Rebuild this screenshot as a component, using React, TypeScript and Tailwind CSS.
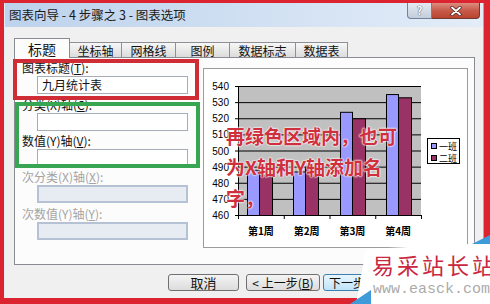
import React from 'react';

const GRID = [540, 530, 520, 510, 500, 490, 480, 470, 460];
const PLOT_L = 34;
const PLOT_R = 217;
const PLOT_T = 17;
const PLOT_B = 146;
const yOf = (v: number) => PLOT_T + ((540 - v) * (PLOT_B - PLOT_T)) / 80;

const WEEKS = [
  { label: '第1周', x: 43, a: 488, b: 485 },
  { label: '第2周', x: 89, a: 487, b: 490 },
  { label: '第3周', x: 136, a: 524, b: 520 },
  { label: '第4周', x: 182, a: 535, b: 533 },
];

function ChartPreview() {
  const catW = (PLOT_R - PLOT_L) / 4;
  return (
    <svg width="263" height="178" viewBox="0 0 263 178">
      <rect x={PLOT_L} y={PLOT_T} width={PLOT_R - PLOT_L} height={PLOT_B - PLOT_T} fill="#c0c0c0" />
      {GRID.map((v) => (
        <g key={v}>
          <line x1={PLOT_L - 3} x2={PLOT_R} y1={yOf(v) + 0.5} y2={yOf(v) + 0.5} stroke="#000" strokeWidth="1" />
          <text
            x="25"
            y={yOf(v) + 4}
            textAnchor="end"
            fontSize="10"
            fontFamily="'Liberation Sans', Arial, sans-serif"
            fill="#000"
          >
            {v}
          </text>
        </g>
      ))}
      {WEEKS.map((w) => (
        <g key={w.label}>
          <rect x={w.x + 0.5} y={yOf(w.a) + 0.5} width="12" height={PLOT_B - yOf(w.a)} fill="#9999ff" stroke="#000" strokeWidth="1" />
          <rect x={w.x + 12.5} y={yOf(w.b) + 0.5} width="13" height={PLOT_B - yOf(w.b)} fill="#993366" stroke="#000" strokeWidth="1" />
        </g>
      ))}
      <line x1={PLOT_L + 0.5} x2={PLOT_L + 0.5} y1={PLOT_T} y2={PLOT_B + 1} stroke="#000" />
      <line x1={PLOT_L} x2={PLOT_R} y1={PLOT_B + 0.5} y2={PLOT_B + 0.5} stroke="#000" />
      {[0, 1, 2, 3, 4].map((k) => (
        <line
          key={k}
          x1={PLOT_L + catW * k + 0.5}
          x2={PLOT_L + catW * k + 0.5}
          y1={PLOT_B}
          y2={PLOT_B + 4}
          stroke="#000"
        />
      ))}
      {WEEKS.map((w, i) => (
        <text
          key={w.label}
          x={PLOT_L + catW * (i + 0.5)}
          y="166"
          textAnchor="middle"
          fontSize="10"
          fontWeight="700"
          fontFamily="'Noto Sans CJK SC', sans-serif"
          fill="#000"
        >
          {w.label}
        </text>
      ))}
      <rect x="223.5" y="69.5" width="32" height="25" fill="#fff" stroke="#000" />
      <rect x="227.5" y="74.5" width="5" height="5" fill="#9999ff" stroke="#000" />
      <rect x="227.5" y="86.5" width="5" height="5" fill="#993366" stroke="#000" />
      <text x="235" y="80.5" fontSize="9" fontFamily="'Noto Sans CJK SC', sans-serif" fill="#000">
        一班
      </text>
      <text x="235" y="92.5" fontSize="9" fontFamily="'Noto Sans CJK SC', sans-serif" fill="#000">
        二班
      </text>
    </svg>
  );
}

function TitleBar() {
  return (
    <div className="flex h-[24px] shrink-0 items-start bg-linear-to-r from-[#bdd2ec] to-[#e3edf8]">
      <span className="pl-[4px] pt-[4px] text-[12.5px] leading-[16px] whitespace-nowrap text-[#1a1a1a]">
        图表向导 - 4 步骤之 3 - 图表选项
      </span>
      <div className="ml-auto mr-[3px] flex">
        <div className="flex h-[16px] w-[25px] items-center justify-center rounded-bl-[4px] border border-t-0 border-[#72829a] bg-linear-to-b from-[#e4eaf1] to-[#c3cedc] text-[11px] leading-[11px] font-bold text-white [text-shadow:0_0_1px_#4a5566,0_0_1px_#4a5566]">
          ?
        </div>
        <div className="flex h-[16px] w-[48px] items-center justify-center rounded-br-[4px] border border-t-0 border-l-0 border-[#6e3a33] bg-linear-to-b from-[#dc8d80] via-[#c85a4a] to-[#b9442f]">
          <svg width="12" height="10" viewBox="0 0 12 10">
            <path d="M2 1.5 L10 8.5 M10 1.5 L2 8.5" stroke="#4a2a26" strokeWidth="3.4" strokeLinecap="round" />
            <path d="M2 1.5 L10 8.5 M10 1.5 L2 8.5" stroke="#ffffff" strokeWidth="1.8" strokeLinecap="round" />
          </svg>
        </div>
      </div>
    </div>
  );
}

function Tabs() {
  return (
    <div className="relative z-10 -mb-px flex h-[20px] items-end">
      <div className="flex h-[20px] w-[56px] items-center justify-center border border-b-0 border-[#898c95] bg-[#fcfcfc] pt-[1px] text-[14px] leading-[16px]">
        标题
      </div>
      <div className="mb-[1px] flex h-[15px] w-[52px] items-center justify-center border border-b-0 border-l-0 border-[#8e9096] bg-linear-to-b from-[#f7f7f7] to-[#dcdcdc] text-[12px] leading-[13px]">
        坐标轴
      </div>
      <div className="mb-[1px] flex h-[15px] w-[54px] items-center justify-center border border-b-0 border-l-0 border-[#8e9096] bg-linear-to-b from-[#f7f7f7] to-[#dcdcdc] text-[12px] leading-[13px]">
        网格线
      </div>
      <div className="mb-[1px] flex h-[15px] w-[54px] items-center justify-center border border-b-0 border-l-0 border-[#8e9096] bg-linear-to-b from-[#f7f7f7] to-[#dcdcdc] text-[12px] leading-[13px]">
        图例
      </div>
      <div className="mb-[1px] flex h-[15px] w-[66px] items-center justify-center border border-b-0 border-l-0 border-[#8e9096] bg-linear-to-b from-[#f7f7f7] to-[#dcdcdc] text-[12px] leading-[13px]">
        数据标志
      </div>
      <div className="mb-[1px] flex h-[15px] w-[52px] items-center justify-center border border-b-0 border-l-0 border-[#8e9096] bg-linear-to-b from-[#f7f7f7] to-[#dcdcdc] text-[12px] leading-[13px]">
        数据表
      </div>
    </div>
  );
}

function FieldColumn() {
  return (
    <div className="flex w-[188px] shrink-0 flex-col pl-[7px] pt-[3px] text-[12px] leading-[14px]">
      <div className="h-[14px] whitespace-nowrap">
        图表标题(<span className="underline underline-offset-1">T</span>):
      </div>
      <div className="ml-[15px] mt-[1px] flex h-[18px] w-[151px] items-center border border-[#a7adb6] bg-white pl-[4px] text-[12px]">
        九月统计表
      </div>

      <div className="mt-[4px] h-[14px] whitespace-nowrap">
        分类(X)轴(<span className="underline underline-offset-1">C</span>):
      </div>
      <div className="ml-[15px] mt-[1px] h-[18px] w-[151px] border border-[#a7adb6] bg-white" />

      <div className="mt-[3px] h-[14px] whitespace-nowrap">
        数值(Y)轴(<span className="underline underline-offset-1">V</span>):
      </div>
      <div className="ml-[15px] mt-[1px] h-[18px] w-[151px] border border-[#a7adb6] bg-white" />

      <div className="mt-[3px] h-[14px] whitespace-nowrap text-[#a4a4a4]">
        次分类(X)轴(<span className="underline underline-offset-1">X</span>):
      </div>
      <div className="ml-[15px] mt-[1px] h-[18px] w-[151px] border-2 border-[#b4c2d4] bg-[#e7ecf3]" />

      <div className="mt-[4px] h-[14px] whitespace-nowrap text-[#a4a4a4]">
        次数值(Y)轴(<span className="underline underline-offset-1">Y</span>):
      </div>
      <div className="ml-[15px] mt-[1px] h-[18px] w-[151px] border-2 border-[#b4c2d4] bg-[#e7ecf3]" />
    </div>
  );
}

function Buttons() {
  return (
    <div className="mt-[9px] flex justify-end text-[12px] leading-[14px]">
      <div className="flex h-[17px] w-[71px] items-center justify-center rounded-[3px] border border-[#707070] bg-linear-to-b from-[#f4f4f4] to-[#dcdcdc] text-[13px]">
        取消
      </div>
      <div className="ml-[7px] flex h-[17px] w-[74px] items-center justify-center rounded-[3px] border border-[#707070] bg-linear-to-b from-[#f4f4f4] to-[#dcdcdc] whitespace-nowrap">
        &lt; 上一步(<span className="underline">B</span>)
      </div>
      <div className="ml-[3px] flex h-[17px] w-[74px] items-center justify-center rounded-[3px] border border-[#3c7fb1] bg-linear-to-b from-[#eaf6fd] to-[#bfe3f8] whitespace-nowrap">
        下一步(<span className="underline">N</span>) &gt;
      </div>
      <div className="ml-[7px] flex h-[17px] w-[71px] items-center justify-center rounded-[3px] border border-[#707070] bg-linear-to-b from-[#f4f4f4] to-[#dcdcdc]">
        完成(<span className="underline">F</span>)
      </div>
    </div>
  );
}

export default function App() {
  return (
    <div className="relative h-[304px] w-[490px] overflow-hidden bg-[#dc2430] pb-[6px] pl-[4px] pr-[6px] pt-[3px] font-['Noto_Sans_CJK_SC',sans-serif] text-[#111]">
      <div className="flex h-full flex-col border-l border-r border-l-[#e6edf5] border-r-[#a3aebd] bg-[#f0f0f0]">
        <TitleBar />
        <div className="flex flex-1 flex-col pl-[9px] pr-[8px] pt-[11px]">
          <Tabs />
          <div className="flex h-[208px] border border-[#898c95] bg-[#fcfcfc]">
            <FieldColumn />
            <div className="mt-[10px] h-[180px] w-[265px] border border-[#9c9c9c] bg-white">
              <ChartPreview />
            </div>
          </div>
          <Buttons />
        </div>
      </div>

      {/* annotation frames */}
      <div className="absolute left-[13px] top-[59px] h-[41px] w-[186px] border-4 border-[#cf2c35]" />
      <div className="absolute left-[15px] top-[102px] h-[66px] w-[185px] border-4 border-[#38a553]" />

      {/* annotation note */}
      <div className="absolute left-[226px] top-[120px] whitespace-nowrap text-[19px] font-bold leading-[31px] text-[#d0303e] [text-shadow:0_0_2px_#fff,0_0_2px_#fff,0_0_1px_#fff]">
        <div>再绿色区域内，也可</div>
        <div>为X轴和Y轴添加名</div>
        <div>字，</div>
      </div>

      {/* site stamp */}
      <div className="absolute left-[350px] top-[236px] h-[68px] w-[140px] bg-white [clip-path:polygon(16px_13px,122px_8px,100%_0,100%_100%,6px_100%)]" />
      <div className="absolute left-[472px] top-[235px] h-[9px] w-[18px] bg-[#3e9ad8] [clip-path:polygon(0_100%,100%_0,100%_100%)]" />
      <div className="absolute left-[350px] top-[290px] h-[14px] w-[21px] bg-[#3e9ad8] [clip-path:polygon(0_100%,100%_0,100%_100%)]" />
      <div className="absolute left-[372px] top-[250px] whitespace-nowrap text-[22px] leading-[28px] tracking-[3px] text-[#c9283f]">
        易采站长站
      </div>
      <div className="absolute left-[373px] top-[281px] whitespace-nowrap font-['Liberation_Mono',monospace] text-[15px] leading-[18px] text-[#ababab]">
        www.easck.com
      </div>
    </div>
  );
}
